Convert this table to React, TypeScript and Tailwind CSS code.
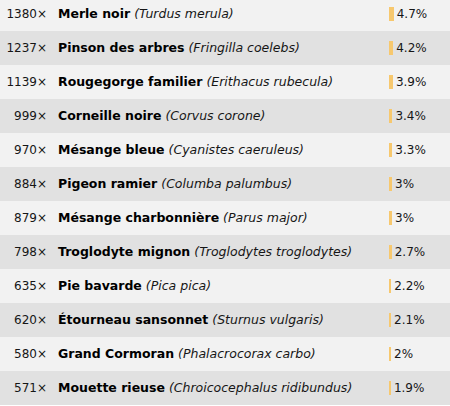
const birds = [
  { count: 1380, name: "Merle noir", latin: "Turdus merula", pct: 4.7 },
  { count: 1237, name: "Pinson des arbres", latin: "Fringilla coelebs", pct: 4.2 },
  { count: 1139, name: "Rougegorge familier", latin: "Erithacus rubecula", pct: 3.9 },
  { count: 999, name: "Corneille noire", latin: "Corvus corone", pct: 3.4 },
  { count: 970, name: "Mésange bleue", latin: "Cyanistes caeruleus", pct: 3.3 },
  { count: 884, name: "Pigeon ramier", latin: "Columba palumbus", pct: 3 },
  { count: 879, name: "Mésange charbonnière", latin: "Parus major", pct: 3 },
  { count: 798, name: "Troglodyte mignon", latin: "Troglodytes troglodytes", pct: 2.7 },
  { count: 635, name: "Pie bavarde", latin: "Pica pica", pct: 2.2 },
  { count: 620, name: "Étourneau sansonnet", latin: "Sturnus vulgaris", pct: 2.1 },
  { count: 580, name: "Grand Cormoran", latin: "Phalacrocorax carbo", pct: 2 },
  { count: 571, name: "Mouette rieuse", latin: "Chroicocephalus ridibundus", pct: 1.9 },
];

export default function App() {
  return (
    <div className="w-[450px] h-[406px] overflow-hidden bg-white font-['DejaVu_Sans',Verdana,sans-serif] text-[12.5px] text-[#161616]">
      <div className="-mt-[3px]">
        {birds.map((b, i) => (
          <div
            key={b.name}
            className={`flex items-center h-[34px] ${i % 2 === 0 ? "bg-[#f2f2f2]" : "bg-[#e1e1e1]"}`}
          >
            {/* count */}
            <div className="w-[47px] text-right whitespace-nowrap text-[12px]">{b.count}×</div>
            <div className="flex-1 ml-[11px] whitespace-nowrap">
              <span className="font-bold text-black">{b.name}</span>{" "}
              <span className="italic">({b.latin})</span>
            </div>
            {/* share bar + percent */}
            <div className="w-[61px] flex items-center text-[12px]">
              <div className="h-[14px] bg-[#f7c86e]" style={{ width: `${b.pct}px` }} />
              <span className="ml-[3px]">{b.pct}%</span>
            </div>
          </div>
        ))}
      </div>
    </div>
  );
}
